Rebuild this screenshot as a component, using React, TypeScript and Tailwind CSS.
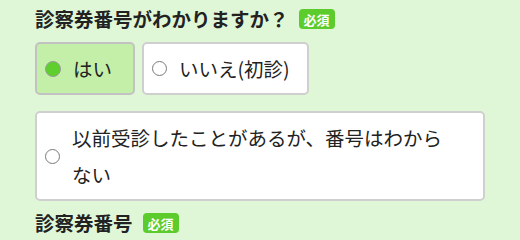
import React, { useState } from 'react';

const jp = { fontFamily: '"Noto Sans CJK JP", "Noto Sans", sans-serif' };

function Badge() {
  return (
    <span className="ml-[10px] inline-flex h-[20px] items-center rounded-[4px] bg-[#5ccb2c] px-[5px] text-[13px] font-bold leading-none text-white">
      必須
    </span>
  );
}

function Radio({ checked }: { checked: boolean }) {
  return checked ? (
    <span className="block h-[16px] w-[16px] shrink-0 rounded-full border-[1.5px] border-[#9a9a9a] bg-[#5fcf2d]" />
  ) : (
    <span className="block h-[15px] w-[15px] shrink-0 rounded-full border-[1.5px] border-[#7a7a7a] bg-white" />
  );
}

const options = [
  { id: 'yes', label: 'はい', cls: 'w-[100px]' },
  { id: 'no', label: 'いいえ(初診)', cls: 'w-[167px]' },
];

export default function App() {
  const [value, setValue] = useState('yes');

  return (
    <div className="h-[240px] w-[520px] overflow-hidden bg-[#e0f7d7] pl-[35px] pt-[5px] text-[#222]" style={jp}>
      <div className="flex h-[28px] items-center text-[19.5px] font-bold">
        診察券番号がわかりますか？
        <Badge />
      </div>

      <div className="mt-[9px] flex gap-[7px]">
        {options.map(o => (
          <button
            key={o.id}
            onClick={() => setValue(o.id)}
            className={`flex h-[53px] items-center gap-[12px] rounded-[5px] border-2 pl-[8px] text-left text-[19.5px] ${o.cls} ${
              value === o.id ? 'border-[#c2c2c2] bg-[#c4efa9]' : 'border-[#cfcfcf] bg-white'
            }`}
          >
            <Radio checked={value === o.id} />
            <span>{o.label}</span>
          </button>
        ))}
      </div>

      <button
        onClick={() => setValue('unknown')}
        className={`mt-[16px] flex w-[450px] items-center gap-[12px] rounded-[5px] border-2 py-[6px] pl-[8px] pr-[32px] text-left text-[19.5px] leading-[37px] ${
          value === 'unknown' ? 'border-[#c2c2c2] bg-[#c4efa9]' : 'border-[#cfcfcf] bg-white'
        }`}
      >
        <Radio checked={value === 'unknown'} />
        <span>以前受診したことがあるが、番号はわからない</span>
      </button>

      <div className="mt-[8px] flex h-[28px] items-center text-[19.5px] font-bold">
        診察券番号
        <Badge />
      </div>
    </div>
  );
}
